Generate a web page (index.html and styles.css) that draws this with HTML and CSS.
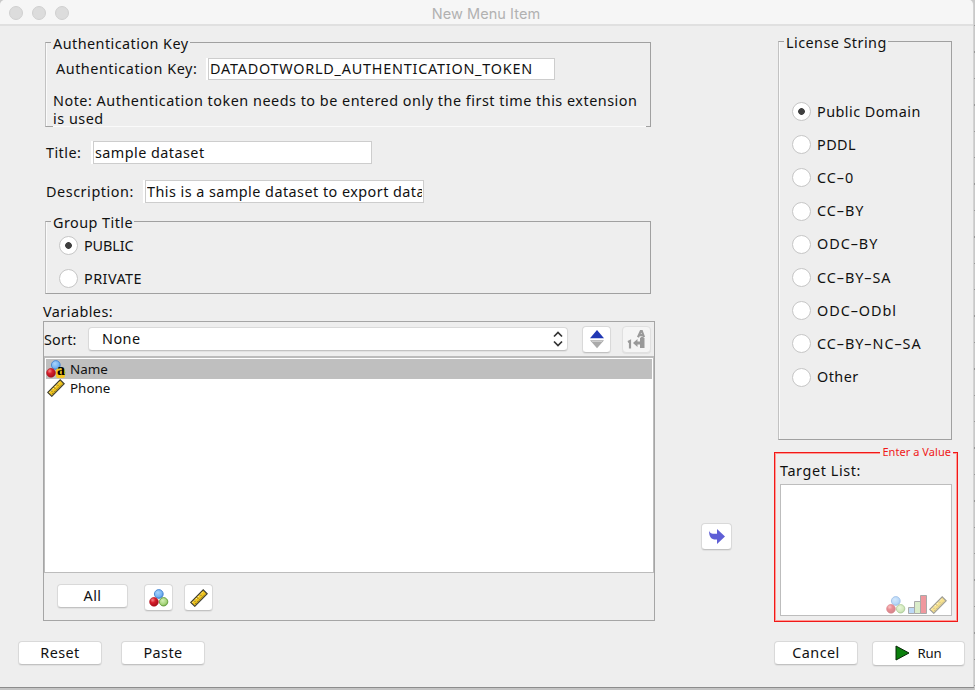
FILE: index.html
```html
<!DOCTYPE html>
<html lang="en">
<head>
<meta charset="utf-8">
<title>New Menu Item</title>
<link rel="stylesheet" href="styles.css">
</head>
<body>
<svg class="defs" width="0" height="0">
  <defs>
    <radialGradient id="gb" cx=".4" cy=".35" r=".7"><stop offset="0" stop-color="#a9d3fb"/><stop offset=".7" stop-color="#6fb0f2"/><stop offset="1" stop-color="#3d7cc9"/></radialGradient>
    <radialGradient id="gr" cx=".35" cy=".3" r=".75"><stop offset="0" stop-color="#f58a8a"/><stop offset=".4" stop-color="#d81f2c"/><stop offset="1" stop-color="#a30d18"/></radialGradient>
    <radialGradient id="gg" cx=".4" cy=".35" r=".7"><stop offset="0" stop-color="#d3efb5"/><stop offset=".7" stop-color="#a3d277"/><stop offset="1" stop-color="#5f9a38"/></radialGradient>
    <symbol id="balls" viewBox="0 0 20 18">
      <circle cx="9.8" cy="5" r="4.4" fill="url(#gb)" stroke="#4685d0" stroke-width=".9"/>
      <circle cx="5" cy="12.8" r="4.4" fill="url(#gr)" stroke="#b0101c" stroke-width=".6"/>
      <circle cx="14.6" cy="12.8" r="4.2" fill="url(#gg)" stroke="#619c3a" stroke-width=".9"/>
    </symbol>
    <symbol id="ruler" viewBox="0 0 18 18">
      <path d="M.8 13.4 13.2.8 17.2 4.8 4.8 17.3Z" fill="#f0c41c" stroke="#3a3a30" stroke-width="1.1"/>
      <path d="M2.3 13.6 13.2 2.5" stroke="#fff8d0" stroke-width="1" stroke-dasharray="1.3 1.3" fill="none"/>
      <path d="m4 11.5 1.3 1.3m1.7-4.3 1.3 1.3m1.7-4.3 1.3 1.3M5.2 15.2 15.4 5" stroke="#3a3a30" stroke-width=".9" stroke-dasharray="1.5 1.2" fill="none"/>
    </symbol>
  </defs>
</svg>
<div class="window">
  <header class="titlebar"><i></i><i></i><i></i><h1>New Menu Item</h1></header>
  <main class="content">
    <section class="left">
      <fieldset class="group auth">
        <legend>Authentication Key</legend>
        <div class="row"><label>Authentication Key:</label><div class="field token">DATADOTWORLD_AUTHENTICATION_TOKEN</div></div>
        <p class="note">Note: Authentication token needs to be entered only the first time this extension<br>is used</p>
      </fieldset>
      <div class="row title-row"><label>Title:</label><div class="field">sample dataset</div></div>
      <div class="row desc-row"><label>Description:</label><div class="field"><div class="clip">This is a sample dataset to export data</div></div></div>
      <fieldset class="group visibility">
        <legend>Group Title</legend>
        <div class="radio on caps"><i></i>PUBLIC</div>
        <div class="radio"><i></i>PRIVATE</div>
      </fieldset>
      <div class="vars-label">Variables:</div>
      <div class="vars">
        <div class="sort">
          <label>Sort:</label>
          <div class="select">None<svg width="10" height="16" viewBox="0 0 10 16"><path d="M1 5.5 5 1.5l4 4M1 10.5l4 4 4-4" fill="none" stroke="#333" stroke-width="1.7"/></svg></div>
          <div class="btn tool"><svg width="14" height="20" viewBox="0 0 14 20"><path d="M0 9.2 7 1l7 8.2z" fill="#2138b4"/><path d="M0 11.2h14L7 19.2z" fill="#aaa"/><path d="M2 12.5h10" stroke="#ccc"/></svg></div>
          <div class="btn tool off"><svg width="20" height="20" viewBox="0 0 20 20"><g fill="none" stroke="#999" stroke-width="2.2"><path d="M11 8.2 13.8 2h1L17 8.2M12 6.2h4"/><path d="M1 13 3 12v7.5"/></g><path d="m6 14 4.5-4v2.5h2.500V9l2-1.5L17.500 9v10h-4.500v-3.500h-2.500V18z" fill="#999"/></svg></div>
        </div>
        <div class="list">
          <div class="item selected"><svg width="20" height="18"><use href="#balls"/><rect x="10" y="8.5" width="9" height="9.5" rx="2" fill="#f4c623"/></svg><b>a</b>Name</div>
          <div class="item"><svg width="18" height="18"><use href="#ruler"/></svg>Phone</div>
        </div>
        <div class="filters">
          <div class="btn all">All</div>
          <div class="btn tool"><svg width="20" height="18"><use href="#balls"/></svg></div>
          <div class="btn tool"><svg width="18" height="18"><use href="#ruler"/></svg></div>
        </div>
      </div>
    </section>
    <div class="middle"><div class="btn move"><svg width="18" height="17" viewBox="0 0 18 17"><path d="M1 2.5C2 5.5 4 6 9 5.8V1l8 7.5L9 16v-4.5C4 12 1 10 1 2.5Z" fill="#5f5fd6"/></svg></div></div>
    <section class="right">
      <fieldset class="group license">
        <legend>License String</legend>
        <div class="radio on"><i></i>Public Domain</div>
        <div class="radio"><i></i>PDDL</div>
        <div class="radio wide"><i></i>CC–0</div>
        <div class="radio wide"><i></i>CC–BY</div>
        <div class="radio wide"><i></i>ODC–BY</div>
        <div class="radio wide"><i></i>CC–BY–SA</div>
        <div class="radio wide"><i></i>ODC–ODbl</div>
        <div class="radio wide"><i></i>CC–BY–NC–SA</div>
        <div class="radio"><i></i>Other</div>
      </fieldset>
      <fieldset class="target">
        <legend>Enter a Value</legend>
        <label>Target List:</label>
        <div class="drop">
          <svg width="20" height="18"><use href="#balls"/></svg>
          <svg width="19" height="19" viewBox="0 0 19 19"><g stroke="#555"><path d="M.5 12.5h6v6h-6z" fill="#7db5ef"/><path d="M6.5 6.5h6v12h-6z" fill="#b7db95"/><path d="M12.5.5h6v18h-6z" fill="#e03340"/></g></svg>
          <svg width="18" height="18"><use href="#ruler"/></svg>
        </div>
      </fieldset>
    </section>
  </main>
  <footer>
    <div class="btn">Reset</div>
    <div class="btn">Paste</div>
    <div class="btn cancel">Cancel</div>
    <div class="btn run"><svg width="15" height="16" viewBox="0 0 15 16"><path d="M1 1v14l13-7z" fill="#0a800c" stroke="#062806"/></svg>Run</div>
  </footer>
</div>
</body>
</html>
```

FILE: styles.css
```css
* { box-sizing: border-box; }
body {
  margin: 0;
  width: 975px;
  height: 690px;
  overflow: hidden;
  background: repeating-linear-gradient(#c9c9c9 0 25px, #999 25px 26.4px);
  font: 14.4px/18px "Noto Sans", "Open Sans", sans-serif;
  letter-spacing: .45px;
  color: #111;
  white-space: nowrap;
}
.defs { display: block; height: 0; }
svg { display: block; flex: none; }
.window {
  width: 974px;
  height: 687px;
  background: #eee;
  border-radius: 5px 5px 0 0;
  border-right: 1px solid #d2d2d2;
  box-shadow: 0 1px 0 #8c8c8c, 0 3px 0 #c4c4c4;
  overflow: hidden;
}
.titlebar {
  display: flex;
  align-items: center;
  gap: 9px;
  height: 26px;
  padding-left: 9px;
  background: #f6f6f6;
  border-bottom: 2px solid #e0e0e0;
}
.titlebar i {
  width: 14px;
  height: 14px;
  margin-top: 1px;
  border: 1px solid #d0d0d0;
  border-radius: 50%;
  background: #dcdcdc;
}
.titlebar h1 {
  flex: 1;
  margin: 3px 79px 0 0;
  text-align: center;
  font: 14.5px/18px Inter, sans-serif;
  letter-spacing: .05px;
  color: #b1b1b1;
}
.content { display: flex; height: 615px; padding-left: 43px; }
.left { width: 612px; padding-top: 7px; }
.middle { width: 119px; padding: 496px 0 0 46px; }
.right { width: 184px; padding-top: 6px; }

.group {
  min-width: 0;
  margin: 0;
  padding: 0;
  border: 1px solid #a0a0a0;
  border-left-color: #c2c2c2;
  box-shadow: inset 1px 0 #fafafa;
}
.group legend { height: 18px; margin-left: 5px; padding: 2px 1px 0 2px; }
.row { display: flex; align-items: center; }
.field {
  width: 279px;
  height: 23px;
  padding: 2px 0 0 1px;
  overflow: hidden;
  background: #fff;
  border: 1px solid #cdcdcd;
  box-shadow: -2px 0 #fff;
}
.auth { width: 606px; height: 94px; margin-left: 2px; }
.auth .row { margin-top: 7px; padding-left: 10px; }
.auth .row label { width: 152px; letter-spacing: .53px; }
.auth .field { width: 347px; height: 22px; padding-top: 1px; }
.token { letter-spacing: .77px; }
.note {
  width: 593px;
  height: 36px;
  margin: 11px 0 0 7px;
  padding-top: 1px;
  background: #eee;
  border-bottom: 1px solid #fafafa;
  letter-spacing: .51px;
}
.title-row { margin-top: 14px; padding-left: 3px; }
.title-row label { width: 47px; }
.desc-row { margin-top: 16px; padding-left: 3px; }
.desc-row label { width: 99px; letter-spacing: .55px; }
.desc-row .clip { width: 275px; overflow: hidden; letter-spacing: .46px; }
.visibility { width: 606px; height: 82px; margin: 9px 0 0 2px; padding-left: 13px; }
.radio { display: flex; align-items: center; gap: 6px; height: 33.2px; }
.radio i {
  width: 19px;
  height: 19px;
  border: 1px solid #c6c6c6;
  border-radius: 50%;
  background: #fff;
}
.radio.on i { background: radial-gradient(circle, #404040 0 3px, #fff 3.7px); }
.caps { letter-spacing: -.1px; }
.wide { letter-spacing: .95px; }
.visibility legend { margin-left: -8px; }
.visibility .radio:first-of-type { margin-top: -1px; }
.vars-label { margin: 9px 0 0; height: 18px; }
.vars { width: 612px; height: 300px; border: 1px solid #a5a5a5; }
.sort { display: flex; align-items: center; height: 34px; }
.sort label { width: 44px; padding-top: 2px; letter-spacing: .2px; }
.select, .btn {
  background: #fff;
  border: 1px solid #d9d9d9;
  border-bottom-color: #c2c2c2;
  border-radius: 4px;
  box-shadow: 0 1px 1px #0000000f;
}
.select {
  display: flex;
  align-items: center;
  justify-content: space-between;
  width: 480px;
  height: 24px;
  margin-right: 14px;
  padding: 0 4px 0 13px;
}
.btn { display: flex; flex: none; align-items: center; justify-content: center; }
.tool { width: 29px; height: 27px; }
.off { margin-left: 11px; background: #f5f5f5; border-color: #e0e0e0; }
.list {
  height: 217px;
  padding: 1px;
  background: #fff;
  border: 1px solid #bcbcbc;
  border-top-width: 2px;
}
.item {
  position: relative;
  display: flex;
  align-items: center;
  height: 19.5px;
  font-size: 13.4px;
  letter-spacing: 0;
}
.item svg { width: 20px; margin-right: 4px; }
.item b {
  position: absolute;
  left: 11px;
  top: 2px;
  font: bold 16px/18px "Liberation Serif", serif;
  color: #000;
}
.selected { background: #bfbfbf; }
.filters { display: flex; align-items: flex-start; padding: 11px 0 0 13px; }
.all { width: 71px; height: 24px; margin-right: 16px; }
.filters .tool { margin: 0 11px 0 0; }
.move { width: 31px; height: 27px; margin-top: 1px; }

.license { width: 174px; height: 408px; margin-left: 4px; padding-left: 13px; }
.license legend { margin-left: -8px; }
.license .radio:first-of-type { margin-top: 45px; }
.target {
  min-width: 0;
  width: 184px;
  height: 176px;
  margin: 6px 0 0;
  padding: 0 4px;
  border: 1px solid #f01818;
  box-shadow: inset 0 0 0 1px #ff9a94;
}
.target legend {
  height: 12px;
  margin: 0 0 0 auto;
  padding: 0 2px;
  font-size: 11px;
  line-height: 12px;
  letter-spacing: .05px;
  color: #f01818;
  background: #eee;
}
.target label { display: block; margin-top: 4px; padding-left: 1px; letter-spacing: .6px; }
.drop {
  display: flex;
  align-items: flex-end;
  justify-content: flex-end;
  gap: 2px;
  width: 172px;
  height: 132px;
  margin: 4px 0 0 1px;
  padding: 0 4px 1px;
  background: #fff;
  border: 1px solid #bdbdbd;
}
.drop svg { opacity: .5; }
footer { display: flex; padding-left: 18px; }
footer .btn { width: 84px; height: 24px; margin-right: 19px; padding-bottom: 1px; }
footer .cancel { margin: 0 14px 0 550px; }
footer .run { width: 93px; height: 25px; margin-right: 0; gap: 7px; font-size: 13.2px; letter-spacing: -.1px; }
```
